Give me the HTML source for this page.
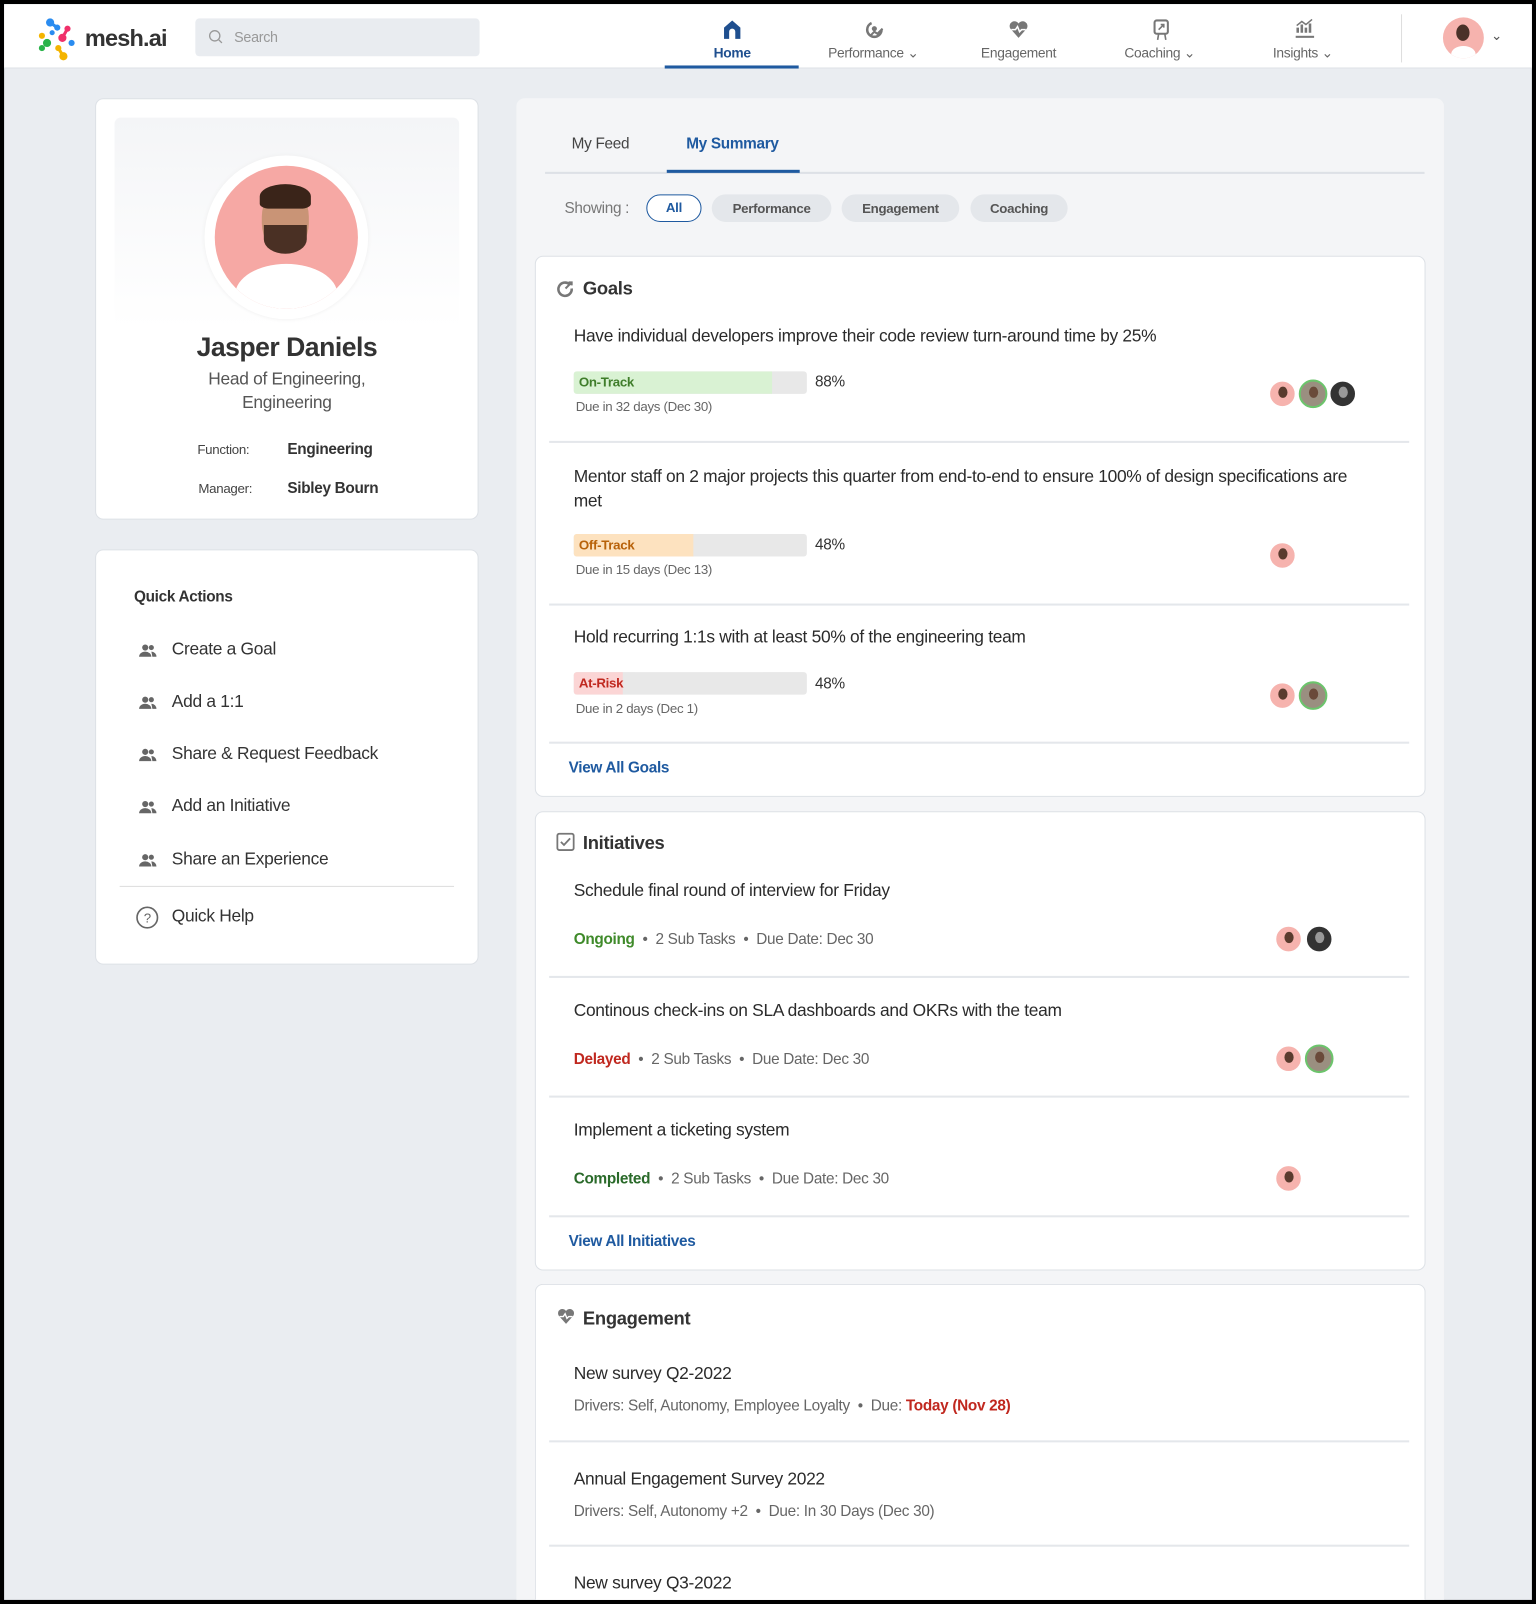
<!DOCTYPE html>
<html><head><meta charset="utf-8">
<style>
*{box-sizing:border-box;margin:0;padding:0}
html,body{width:1536px;height:1604px;overflow:hidden;background:#000}
#w{position:absolute;left:0;top:0;width:1502px;height:1568px;transform:scale(1.02264,1.02296);transform-origin:0 0;background:#000;font-family:"Liberation Sans",sans-serif;color:#2b2b2b;letter-spacing:-0.3px;overflow:hidden}
.a{position:absolute}
#in{position:absolute;left:4px;top:4px;width:1494px;height:1560px;background:#eaedf1;overflow:hidden}
.hdr{left:0;top:0;width:1494px;height:63px;background:#fff;border-bottom:1px solid #dde1e6}
.nav{font-size:13.5px;color:#666;text-align:center;width:140px}
.card{background:#fff;border:1px solid #dde1e6;border-radius:8px}
.t{white-space:nowrap}
.pill{height:27px;border-radius:14px;background:#e4e7eb;font-size:13px;font-weight:bold;color:#555;text-align:center;line-height:27px}
.bar{height:22px;width:228px;background:#e8e8e8;border-radius:3px;overflow:hidden}
.bar div{height:22px}
.bl{font-size:13px;font-weight:bold;line-height:22px;white-space:nowrap}
.div{height:2px;background:#e4e7eb;width:841px}
.av{width:28px;height:28px;border-radius:50%;background:#f6b3ae;border:2px solid #fff;overflow:hidden}
.av::after{content:"";position:absolute;left:8px;top:5px;width:9px;height:11px;border-radius:50%;background:#5a3b2e}
.av.g{background:#9a8f80;border-color:#6cc46c}.av.g::after{background:#6a4a3a}
.av.k{background:#333}.av.k::after{background:#999}
.gt{font-size:17px;color:#2b2b2b}
.due{font-size:13px;color:#666}
.sub{font-size:15px;color:#666}
.qa{font-size:17px;color:#333}
</style></head><body><div id="w"><div id="in">
<div class="a hdr"></div>
<svg class="a" style="left:32px;top:12px" width="48" height="44" viewBox="0 0 48 44">
<circle cx="13" cy="6" r="4" fill="#2a8cf0"/><circle cx="20" cy="11" r="3" fill="#2a8cf0"/><line x1="13" y1="6" x2="20" y2="11" stroke="#2a8cf0" stroke-width="3"/>
<circle cx="5" cy="19" r="3" fill="#f4b400"/><circle cx="10" cy="26" r="4" fill="#2ab34a"/><circle cx="5" cy="31" r="3" fill="#2ab34a"/>
<circle cx="30" cy="12" r="3" fill="#f0306a"/><circle cx="25" cy="21" r="4" fill="#f0306a"/><line x1="30" y1="12" x2="25" y2="21" stroke="#f0306a" stroke-width="3"/>
<circle cx="21" cy="31" r="3" fill="#f4b400"/><circle cx="26" cy="39" r="4" fill="#f4b400"/><line x1="21" y1="31" x2="26" y2="39" stroke="#f4b400" stroke-width="3"/>
<circle cx="34" cy="26" r="3" fill="#2a8cf0"/><circle cx="15" cy="16" r="2.5" fill="#2a8cf0"/>
</svg>
<div class="a t" style="left:79px;top:20px;font-size:23px;font-weight:bold;color:#333;letter-spacing:-0.8px">mesh.ai</div>
<div class="a" style="left:187px;top:14px;width:278px;height:37px;background:#e9ecf0;border-radius:4px"></div>
<svg class="a" style="left:199px;top:24px" width="16" height="16" viewBox="0 0 16 16"><circle cx="7" cy="7" r="5" fill="none" stroke="#999" stroke-width="1.3"/><line x1="11" y1="11" x2="14" y2="14" stroke="#999" stroke-width="1.3"/></svg>
<div class="a t" style="left:225px;top:24px;font-size:14px;color:#999">Search</div>
<svg class="a" style="left:702px;top:15px" width="20" height="20" viewBox="0 0 20 20"><path d="M2 8 L10 1 L18 8 V19 H13 V12 a3 3 0 0 0 -6 0 V19 H2Z" fill="#1f4f8f"/></svg>
<div class="a nav" style="left:642px;top:40px;color:#1f4f8f;font-weight:bold">Home</div>
<div class="a" style="left:646px;top:60px;width:131px;height:3px;background:#1f5aa0"></div>
<svg class="a" style="left:841px;top:15px" width="20" height="20" viewBox="0 0 20 20"><circle cx="10" cy="10" r="7" fill="none" stroke="#777" stroke-width="2.5" stroke-dasharray="30 14"/><circle cx="10" cy="9" r="2.5" fill="#777"/><path d="M6 16 L10 12 L13 14 L18 9" stroke="#777" stroke-width="2" fill="none"/></svg>
<div class="a nav" style="left:780px;top:40px">Performance ⌄</div>
<svg class="a" style="left:982px;top:15px" width="20" height="20" viewBox="0 0 20 20"><path d="M10 18 L2 9 A4.5 4.5 0 0 1 10 4 A4.5 4.5 0 0 1 18 9Z" fill="#777"/><path d="M3 10 H7 L9 7 L11 12 L13 10 H17" stroke="#fff" stroke-width="1.5" fill="none"/></svg>
<div class="a nav" style="left:922px;top:40px">Engagement</div>
<svg class="a" style="left:1122px;top:14px" width="20" height="22" viewBox="0 0 20 22"><rect x="3" y="2" width="13" height="13" rx="2" fill="none" stroke="#777" stroke-width="2"/><path d="M7 11 L12 6 M9 6 H12 V9" stroke="#777" stroke-width="1.6" fill="none"/><path d="M7 15 L6 21 M13 15 L14 21" stroke="#777" stroke-width="1.6"/></svg>
<div class="a nav" style="left:1060px;top:40px">Coaching ⌄</div>
<svg class="a" style="left:1262px;top:14px" width="20" height="22" viewBox="0 0 20 22"><path d="M3 14 V9 M7 14 V6 M11 14 V9 M15 14 V5" stroke="#777" stroke-width="2.5"/><path d="M2 7 L7 3 L11 6 L17 1" stroke="#777" stroke-width="1.5" fill="none"/><rect x="1" y="17" width="18" height="2" fill="#777"/></svg>
<div class="a nav" style="left:1200px;top:40px">Insights ⌄</div>
<div class="a" style="left:1366px;top:10px;width:1px;height:47px;background:#ddd"></div>
<div class="a" style="left:1407px;top:13px;width:40px;height:40px;border-radius:50%;background:#f6b3ae;overflow:hidden"><div class="a" style="left:13px;top:7px;width:13px;height:16px;border-radius:50%;background:#4a3128"></div><div class="a" style="left:8px;top:28px;width:24px;height:16px;border-radius:50% 50% 0 0;background:#fff"></div></div>
<div class="a" style="left:1454px;top:23px;font-size:13px;color:#555">⌄</div>

<div class="a card" style="left:89px;top:92px;width:375px;height:412px"></div>
<div class="a" style="left:108px;top:111px;width:337px;height:206px;background:linear-gradient(#f4f5f7,#fff);border-radius:6px"></div>
<div class="a" style="left:196px;top:148px;width:160px;height:160px;border-radius:50%;background:#fff;box-shadow:0 0 4px #eee"></div>
<div class="a" style="left:206px;top:158px;width:140px;height:140px;border-radius:50%;background:#f6a8a4;overflow:hidden">
<div class="a" style="left:46px;top:22px;width:46px;height:62px;border-radius:45%;background:#c99476"></div>
<div class="a" style="left:44px;top:18px;width:50px;height:24px;border-radius:50% 50% 20% 20%;background:#3a2419"></div>
<div class="a" style="left:48px;top:58px;width:42px;height:28px;border-radius:0 0 50% 50%;background:#4a3024"></div>
<div class="a" style="left:20px;top:96px;width:100px;height:60px;border-radius:50% 50% 0 0;background:#fff"></div>
</div>
<div class="a t" style="left:89px;top:320px;width:375px;text-align:center;font-size:26px;font-weight:bold;color:#333;letter-spacing:-0.5px">Jasper Daniels</div>
<div class="a" style="left:89px;top:355px;width:375px;text-align:center;font-size:17px;color:#555;line-height:23px">Head of Engineering,<br>Engineering</div>
<div class="a t" style="left:189px;top:428px;font-size:13px;color:#444">Function:</div>
<div class="a t" style="left:277px;top:427px;font-size:15px;font-weight:bold;color:#333">Engineering</div>
<div class="a t" style="left:190px;top:466px;font-size:13px;color:#444">Manager:</div>
<div class="a t" style="left:277px;top:465px;font-size:15px;font-weight:bold;color:#333">Sibley Bourn</div>

<div class="a card" style="left:89px;top:533px;width:375px;height:406px"></div>
<div class="a t" style="left:127px;top:571px;font-size:15px;font-weight:bold;color:#333">Quick Actions</div>
<svg width="0" height="0" style="position:absolute"><defs><g id="pp"><circle cx="7" cy="5" r="3" fill="#666"/><path d="M1 14 a6 5 0 0 1 12 0Z" fill="#666"/><circle cx="13" cy="5" r="2.5" fill="#666"/><path d="M13 9 a5 5 0 0 1 5 5 h-4" fill="#666"/></g></defs></svg>
<svg class="a" style="left:131px;top:624px" width="20" height="16"><use href="#pp"/></svg><div class="a t qa" style="left:164px;top:621px">Create a Goal</div>
<svg class="a" style="left:131px;top:675px" width="20" height="16"><use href="#pp"/></svg><div class="a t qa" style="left:164px;top:672px">Add a 1:1</div>
<svg class="a" style="left:131px;top:726px" width="20" height="16"><use href="#pp"/></svg><div class="a t qa" style="left:164px;top:723px">Share &amp; Request Feedback</div>
<svg class="a" style="left:131px;top:777px" width="20" height="16"><use href="#pp"/></svg><div class="a t qa" style="left:164px;top:774px">Add an Initiative</div>
<svg class="a" style="left:131px;top:829px" width="20" height="16"><use href="#pp"/></svg><div class="a t qa" style="left:164px;top:826px">Share an Experience</div>
<div class="a" style="left:113px;top:862px;width:327px;height:1px;background:#ddd"></div>
<svg class="a" style="left:128px;top:881px" width="24" height="24" viewBox="0 0 24 24"><circle cx="12" cy="12" r="10" fill="none" stroke="#666" stroke-width="1.6"/><text x="12" y="17" font-size="13" text-anchor="middle" fill="#666" font-family="Liberation Sans">?</text></svg>
<div class="a t qa" style="left:164px;top:882px">Quick Help</div>

<div class="a" style="left:501px;top:92px;width:907px;height:1468px;background:#f4f5f7;border-radius:8px 8px 0 0"></div>
<div class="a t" style="left:555px;top:128px;font-size:15px;color:#444">My Feed</div>
<div class="a t" style="left:667px;top:128px;font-size:15px;color:#1f5aa0;font-weight:bold">My Summary</div>
<div class="a" style="left:529px;top:164px;width:860px;height:2px;background:#dde1e6"></div>
<div class="a" style="left:648px;top:162px;width:130px;height:3px;background:#1f5aa0"></div>
<div class="a t" style="left:548px;top:191px;font-size:15px;color:#777">Showing :</div>
<div class="a pill" style="left:628px;top:186px;width:54px;background:#fff;border:1.5px solid #1f5aa0;color:#1f5aa0;line-height:24px">All</div>
<div class="a pill" style="left:692px;top:186px;width:117px">Performance</div>
<div class="a pill" style="left:819px;top:186px;width:115px">Engagement</div>
<div class="a pill" style="left:945px;top:186px;width:95px">Coaching</div>

<div class="a card" style="left:519px;top:246px;width:871px;height:529px"></div>
<svg class="a" style="left:540px;top:269px" width="18" height="18" viewBox="0 0 18 18"><path d="M13 5 A6.5 6.5 0 1 0 15 9" fill="none" stroke="#777" stroke-width="2.5"/><path d="M9 9 L15 3 M12 3 H15 V6" stroke="#777" stroke-width="2" fill="none"/></svg>
<div class="a t" style="left:566px;top:268px;font-size:18px;font-weight:bold;color:#333">Goals</div>
<div class="a t gt" style="left:557px;top:315px">Have individual developers improve their code review turn-around time by 25%</div>
<div class="a bar" style="left:557px;top:359px"><div style="width:194px;background:#d9f2d3"></div></div>
<div class="a bl" style="left:562px;top:359px;color:#3f7d2a">On-Track</div>
<div class="a t" style="left:793px;top:361px;font-size:15px;color:#333">88%</div>
<div class="a t due" style="left:559px;top:386px">Due in 32 days (Dec 30)</div>
<div class="a av" style="left:1236px;top:367px"></div><div class="a av g" style="left:1266px;top:367px"></div><div class="a av k" style="left:1295px;top:367px"></div>
<div class="a div" style="left:533px;top:427px"></div>
<div class="a gt" style="left:557px;top:450px;width:780px;line-height:24px">Mentor staff on 2 major projects this quarter from end-to-end to ensure 100% of design specifications are met</div>
<div class="a bar" style="left:557px;top:518px"><div style="width:117px;background:#fde2bf"></div></div>
<div class="a bl" style="left:562px;top:518px;color:#b8620a">Off-Track</div>
<div class="a t" style="left:793px;top:520px;font-size:15px;color:#333">48%</div>
<div class="a t due" style="left:559px;top:545px">Due in 15 days (Dec 13)</div>
<div class="a av" style="left:1236px;top:525px"></div>
<div class="a div" style="left:533px;top:586px"></div>
<div class="a t gt" style="left:557px;top:609px">Hold recurring 1:1s with at least 50% of the engineering team</div>
<div class="a bar" style="left:557px;top:653px"><div style="width:48px;background:#fbd5d5"></div></div>
<div class="a bl" style="left:562px;top:653px;color:#c0281f">At-Risk</div>
<div class="a t" style="left:793px;top:656px;font-size:15px;color:#333">48%</div>
<div class="a t due" style="left:559px;top:681px">Due in 2 days (Dec 1)</div>
<div class="a av" style="left:1236px;top:662px"></div><div class="a av g" style="left:1266px;top:662px"></div>
<div class="a div" style="left:533px;top:721px"></div>
<div class="a t" style="left:552px;top:738px;font-size:15px;font-weight:bold;color:#1f5aa0">View All Goals</div>

<div class="a card" style="left:519px;top:789px;width:871px;height:449px"></div>
<svg class="a" style="left:540px;top:810px" width="18" height="18" viewBox="0 0 18 18"><rect x="1" y="1" width="16" height="16" rx="2" fill="none" stroke="#777" stroke-width="1.8"/><path d="M4.5 9 L7.5 12 L13.5 5.5" stroke="#777" stroke-width="1.8" fill="none"/></svg>
<div class="a t" style="left:566px;top:810px;font-size:18px;font-weight:bold;color:#333">Initiatives</div>
<div class="a t gt" style="left:557px;top:857px">Schedule final round of interview for Friday</div>
<div class="a t sub" style="left:557px;top:906px"><b style="color:#3f8a2a">Ongoing</b> &nbsp;•&nbsp; 2 Sub Tasks &nbsp;•&nbsp; Due Date: Dec 30</div>
<div class="a av" style="left:1242px;top:900px"></div><div class="a av k" style="left:1272px;top:900px"></div>
<div class="a div" style="left:533px;top:950px"></div>
<div class="a t gt" style="left:557px;top:974px">Continous check-ins on SLA dashboards and OKRs with the team</div>
<div class="a t sub" style="left:557px;top:1023px"><b style="color:#c0281f">Delayed</b> &nbsp;•&nbsp; 2 Sub Tasks &nbsp;•&nbsp; Due Date: Dec 30</div>
<div class="a av" style="left:1242px;top:1017px"></div><div class="a av g" style="left:1272px;top:1017px"></div>
<div class="a div" style="left:533px;top:1067px"></div>
<div class="a t gt" style="left:557px;top:1091px">Implement a ticketing system</div>
<div class="a t sub" style="left:557px;top:1140px"><b style="color:#2a6a2a">Completed</b> &nbsp;•&nbsp; 2 Sub Tasks &nbsp;•&nbsp; Due Date: Dec 30</div>
<div class="a av" style="left:1242px;top:1134px"></div>
<div class="a div" style="left:533px;top:1184px"></div>
<div class="a t" style="left:552px;top:1201px;font-size:15px;font-weight:bold;color:#1f5aa0">View All Initiatives</div>

<div class="a card" style="left:519px;top:1251px;width:871px;height:309px;border-bottom:none;border-radius:8px 8px 0 0"></div>
<svg class="a" style="left:540px;top:1274px" width="19" height="18" viewBox="0 0 20 20"><path d="M10 18 L2 9 A4.5 4.5 0 0 1 10 4 A4.5 4.5 0 0 1 18 9Z" fill="#777"/><path d="M3 10 H7 L9 7 L11 12 L13 10 H17" stroke="#fff" stroke-width="1.5" fill="none"/></svg>
<div class="a t" style="left:566px;top:1275px;font-size:18px;font-weight:bold;color:#333">Engagement</div>
<div class="a t gt" style="left:557px;top:1329px">New survey Q2-2022</div>
<div class="a t sub" style="left:557px;top:1362px">Drivers: Self, Autonomy, Employee Loyalty &nbsp;•&nbsp; Due: <b style="color:#c0281f">Today (Nov 28)</b></div>
<div class="a div" style="left:533px;top:1404px"></div>
<div class="a t gt" style="left:557px;top:1432px">Annual Engagement Survey 2022</div>
<div class="a t sub" style="left:557px;top:1465px">Drivers: Self, Autonomy +2 &nbsp;•&nbsp; Due: In 30 Days (Dec 30)</div>
<div class="a div" style="left:533px;top:1506px"></div>
<div class="a t gt" style="left:557px;top:1534px">New survey Q3-2022</div>
</div></div></body></html>
